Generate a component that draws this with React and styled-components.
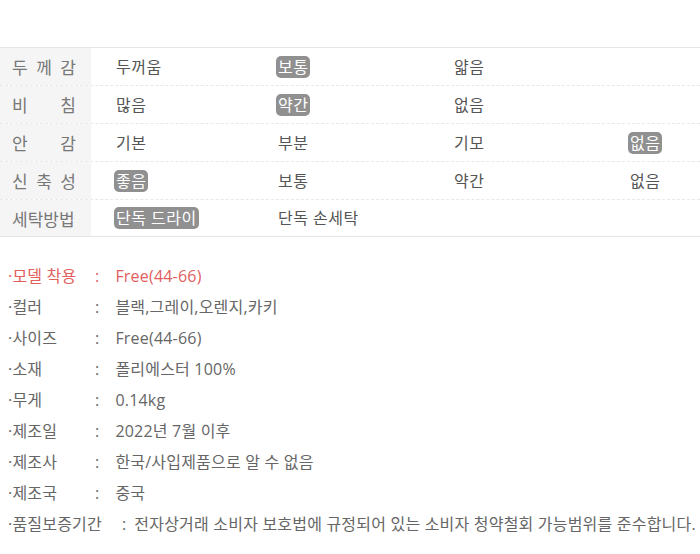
import React from "react";
import styled, { createGlobalStyle } from "styled-components";

const GlobalStyle = createGlobalStyle`
  html, body {
    margin: 0;
    padding: 0;
    background: #fff;
  }
  body {
    font-family: "Open Sans", "Noto Sans CJK KR", sans-serif;
  }
`;

const fitRows = [
  { label: "두 께 감", values: ["두꺼움", "보통", "얇음"], on: 1 },
  { label: "비 침", values: ["많음", "약간", "없음"], on: 1 },
  { label: "안 감", values: ["기본", "부분", "기모", "없음"], on: 3 },
  { label: "신 축 성", values: ["좋음", "보통", "약간", "없음"], on: 0 },
  { label: "세탁방법", values: ["단독 드라이", "단독 손세탁"], on: 0 },
];

const specs = [
  { name: "·모델 착용", value: "Free(44-66)", accent: true },
  { name: "·컬러", value: "블랙,그레이,오렌지,카키" },
  { name: "·사이즈", value: "Free(44-66)" },
  { name: "·소재", value: "폴리에스터 100%" },
  { name: "·무게", value: "0.14kg" },
  { name: "·제조일", value: "2022년 7월 이후" },
  { name: "·제조사", value: "한국/사입제품으로 알 수 없음" },
  { name: "·제조국", value: "중국" },
  {
    name: "·품질보증기간",
    value: "전자상거래 소비자 보호법에 규정되어 있는 소비자 청약철회 가능범위를 준수합니다.",
    long: true,
  },
];

export default function App() {
  return (
    <Page>
      <GlobalStyle />
      <FitTable>
        {fitRows.map((row) => (
          <FitRow key={row.label}>
            <LabelCell>
              <LabelText>{row.label}</LabelText>
            </LabelCell>
            {[0, 1, 2, 3].map((i) => (
              <ValueCell key={i}>
                {row.values[i] && (
                  <Chip $on={i === row.on}>{row.values[i]}</Chip>
                )}
              </ValueCell>
            ))}
          </FitRow>
        ))}
      </FitTable>

      <SpecList>
        {specs.map((s) => (
          <SpecRow key={s.name} $accent={s.accent}>
            <SpecName>{s.name}</SpecName>
            <Colon $long={s.long}>:</Colon>
            <SpecValue>{s.value}</SpecValue>
          </SpecRow>
        ))}
      </SpecList>
    </Page>
  );
}

const Page = styled.div`
  width: 700px;
  padding-top: 47px;
`;

const FitTable = styled.div`
  border-top: 1px solid #e6e6e6;
  border-bottom: 1px solid #e6e6e6;
`;

const FitRow = styled.div`
  display: grid;
  grid-template-columns: 91px 162px 176px 176px 1fr;
  height: 37px;
  border-bottom: 1px dashed #e8e8e8;

  &:last-child {
    border-bottom: none;
    height: 36px;
  }
`;

const LabelCell = styled.div`
  background: #f5f5f5;
  display: flex;
  align-items: center;
  padding-left: 12px;
`;

const LabelText = styled.span`
  display: inline-block;
  width: 64px;
  font-size: 17px;
  color: #777;
  white-space: nowrap;
  text-align: justify;
  text-align-last: justify;
`;

const ValueCell = styled.div`
  display: flex;
  align-items: center;
  padding-left: 23px;
`;

const Chip = styled.span`
  display: inline-block;
  padding: 0 2px;
  line-height: 22px;
  border-radius: 5px;
  font-size: 16px;
  letter-spacing: 0.5px;
  white-space: nowrap;
  color: ${(p) => (p.$on ? "#fff" : "#555")};
  background: ${(p) => (p.$on ? "#909090" : "transparent")};
`;

const SpecList = styled.div`
  padding: 24px 0 0 8px;
`;

const SpecRow = styled.div`
  display: flex;
  align-items: baseline;
  height: 31px;
  line-height: 31px;
  font-size: 16px;
  letter-spacing: 0.2px;
  white-space: nowrap;
  color: ${(p) => (p.$accent ? "#e0605e" : "#666")};
`;

const SpecName = styled.span`
  min-width: 83px;
`;

const Colon = styled.span`
  padding: ${(p) => (p.$long ? "0 8px 0 20px" : "0 16px 0 4px")};
`;

const SpecValue = styled.span``;
